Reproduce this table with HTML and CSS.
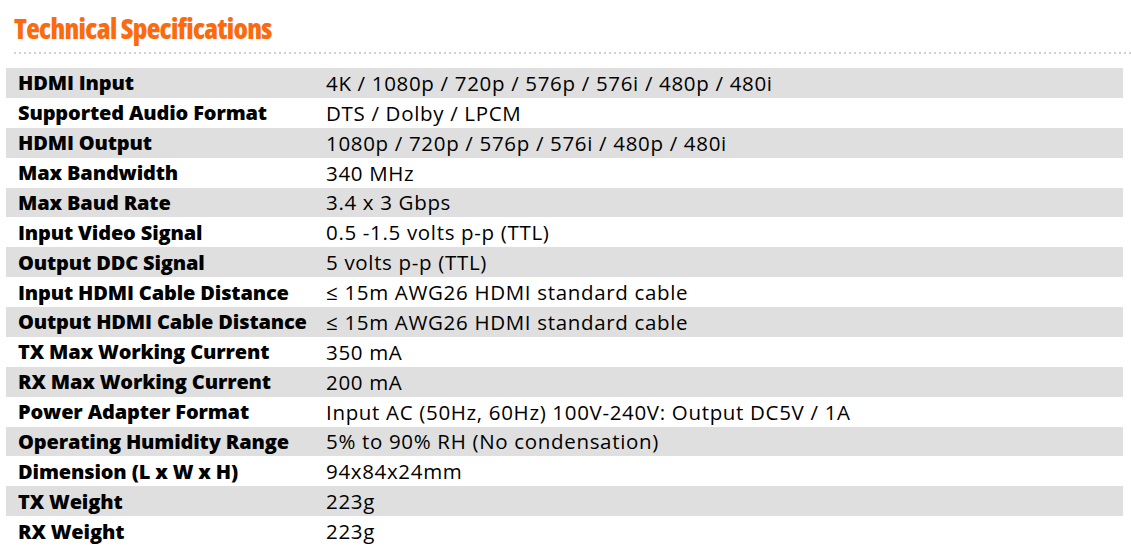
FILE: index.html
```html
<!DOCTYPE html>
<html>
<head>
<meta charset="utf-8">
<link rel="stylesheet" href="styles.css">
</head>
<body>
<div class="page">
  <h1 class="title">Technical Specifications</h1>
  <div class="rule"></div>
  <div class="specs">
    <div class="row"><div class="label">HDMI Input</div><div class="value">4K / 1080p / 720p / 576p / 576i / 480p / 480i</div></div>
    <div class="row"><div class="label">Supported Audio Format</div><div class="value">DTS / Dolby / LPCM</div></div>
    <div class="row"><div class="label">HDMI Output</div><div class="value">1080p / 720p / 576p / 576i / 480p / 480i</div></div>
    <div class="row"><div class="label">Max Bandwidth</div><div class="value">340 MHz</div></div>
    <div class="row"><div class="label">Max Baud Rate</div><div class="value">3.4 x 3 Gbps</div></div>
    <div class="row"><div class="label">Input Video Signal</div><div class="value">0.5 -1.5 volts p-p (TTL)</div></div>
    <div class="row"><div class="label">Output DDC Signal</div><div class="value">5 volts p-p (TTL)</div></div>
    <div class="row"><div class="label">Input HDMI Cable Distance</div><div class="value">≤ 15m AWG26 HDMI standard cable</div></div>
    <div class="row"><div class="label">Output HDMI Cable Distance</div><div class="value">≤ 15m AWG26 HDMI standard cable</div></div>
    <div class="row"><div class="label">TX Max Working Current</div><div class="value">350 mA</div></div>
    <div class="row"><div class="label">RX Max Working Current</div><div class="value">200 mA</div></div>
    <div class="row"><div class="label">Power Adapter Format</div><div class="value">Input AC (50Hz, 60Hz) 100V-240V: Output DC5V / 1A</div></div>
    <div class="row"><div class="label">Operating Humidity Range</div><div class="value">5% to 90% RH (No condensation)</div></div>
    <div class="row"><div class="label">Dimension (L x W x H)</div><div class="value">94x84x24mm</div></div>
    <div class="row"><div class="label">TX Weight</div><div class="value">223g</div></div>
    <div class="row"><div class="label">RX Weight</div><div class="value">223g</div></div>
  </div>
</div>
</body>
</html>
```
FILE: styles.css
```css
html, body {
  margin: 0;
  padding: 0;
  background: #ffffff;
}
.page {
  padding: 0 0 0 6px;
  font-family: "Open Sans", "Liberation Sans", sans-serif;
  color: #000;
}
.title {
  margin: 0;
  padding: 12px 0 0 8px;
  height: 42px;
  box-sizing: border-box;
  font-family: "Open Sans", "Liberation Sans", sans-serif;
  font-stretch: 78%;
  font-weight: 800;
  font-size: 28px;
  line-height: 32px;
  letter-spacing: -0.7px;
  color: #fb6a0c;
}
.rule {
  margin: 10px 0 0 8px;
  height: 2px;
  background-image: linear-gradient(to right, #d2d2d2 0 2px, transparent 2px 5px);
  background-size: 5px 2px;
  background-repeat: repeat-x;
}
.specs {
  margin-top: 14px;
  width: 1117px;
  display: flex;
  flex-direction: column;
}
.row {
  display: grid;
  grid-template-columns: 320px 1fr;
  height: 29.875px;
  align-items: center;
  font-size: 20px;
}
.row:nth-child(odd) {
  background: #dfdfdf;
}
.label {
  padding-left: 12px;
  font-weight: 800;
  letter-spacing: -0.15px;
}
.value {
  font-weight: normal;
  font-size: 20.5px;
  letter-spacing: 0.67px;
}
```
